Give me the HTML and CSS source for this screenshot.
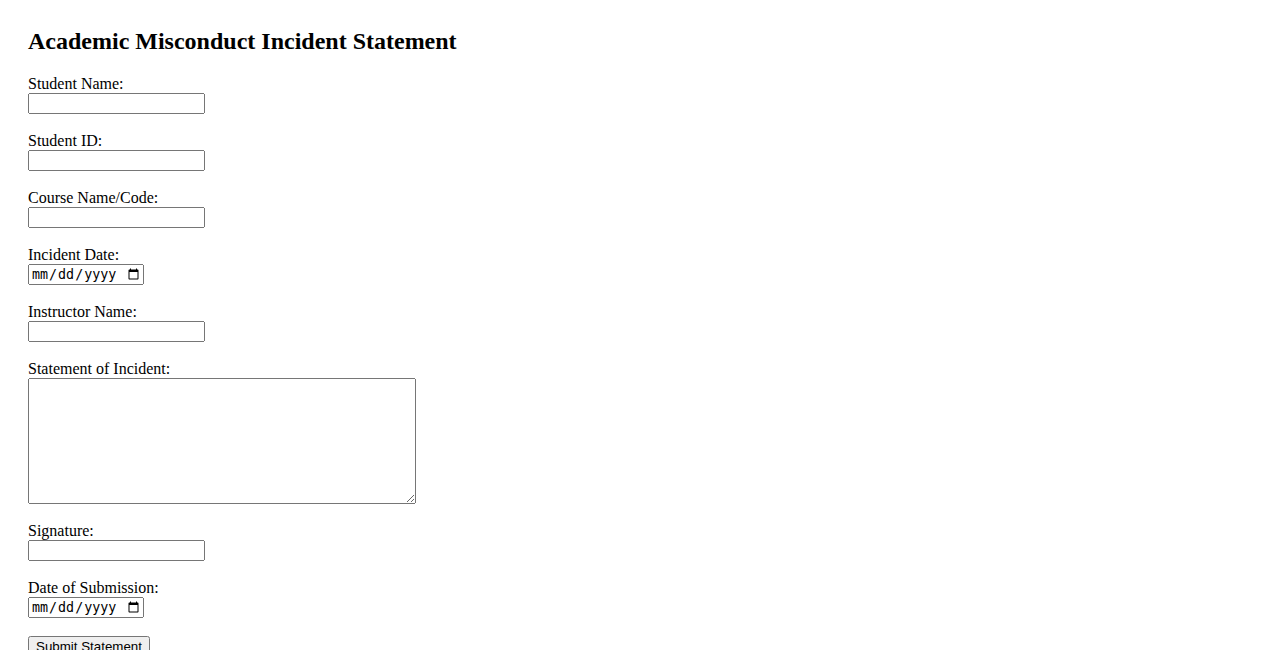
FILE: index.html
```html
<!DOCTYPE html>
<html>
<head>
<meta charset="utf-8">
<title>Academic Misconduct Incident Statement</title>
<link rel="stylesheet" href="styles.css">
</head>
<body>
<div class="page">
<h2 class="title">Academic Misconduct Incident Statement</h2>
<form class="form">
<label for="name">Student Name:</label><br>
<input class="text" type="text" id="name" name="name"><br><br>
<label for="sid">Student ID:</label><br>
<input class="text" type="text" id="sid" name="sid"><br><br>
<label for="course">Course Name/Code:</label><br>
<input class="text" type="text" id="course" name="course"><br><br>
<label for="idate">Incident Date:</label><br>
<input class="date" type="date" id="idate" name="idate"><br><br>
<label for="instructor">Instructor Name:</label><br>
<input class="text" type="text" id="instructor" name="instructor"><br><br>
<label for="statement">Statement of Incident:</label><br>
<textarea class="area" id="statement" name="statement" rows="8" cols="50"></textarea><br><br>
<label for="sig">Signature:</label><br>
<input class="text" type="text" id="sig" name="sig"><br><br>
<label for="sdate">Date of Submission:</label><br>
<input class="date" type="date" id="sdate" name="sdate"><br><br>
<input class="submit" type="submit" value="Submit Statement">
</form>
</div>
</body>
</html>
```
FILE: styles.css
```css
body {
  margin: 0;
  font-family: "Liberation Serif", "Times New Roman", serif;
  font-size: 16px;
  color: #000;
  background: #fff;
}
.page {
  padding: 8px 28px;
}
.title {
  font-size: 24px;
  font-weight: bold;
  margin: 20px 0;
}
.text {
  width: 177px;
  height: 21px;
  box-sizing: border-box;
}
.date {
  width: 116px;
  height: 21px;
  box-sizing: border-box;
}
.area {
  width: 388px;
  height: 126px;
  box-sizing: border-box;
  vertical-align: bottom;
}
```
